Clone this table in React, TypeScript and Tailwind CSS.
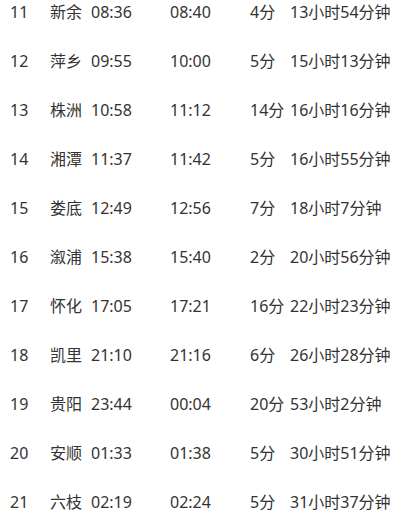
const rows: [string, string, string, string, string, string][] = [
  ["11", "新余", "08:36", "08:40", "4分", "13小时54分钟"],
  ["12", "萍乡", "09:55", "10:00", "5分", "15小时13分钟"],
  ["13", "株洲", "10:58", "11:12", "14分", "16小时16分钟"],
  ["14", "湘潭", "11:37", "11:42", "5分", "16小时55分钟"],
  ["15", "娄底", "12:49", "12:56", "7分", "18小时7分钟"],
  ["16", "溆浦", "15:38", "15:40", "2分", "20小时56分钟"],
  ["17", "怀化", "17:05", "17:21", "16分", "22小时23分钟"],
  ["18", "凯里", "21:10", "21:16", "6分", "26小时28分钟"],
  ["19", "贵阳", "23:44", "00:04", "20分", "53小时2分钟"],
  ["20", "安顺", "01:33", "01:38", "5分", "30小时51分钟"],
  ["21", "六枝", "02:19", "02:24", "5分", "31小时37分钟"],
];

export default function App() {
  return (
    <div className="w-[402px] h-[519px] overflow-hidden bg-white text-[#333] text-[16px] font-['Noto_Sans','Noto_Sans_CJK_SC',sans-serif]">
      <div className="-mt-[13px]">
        {rows.map((r) => (
          <div
            key={r[0]}
            className="grid h-[49px] items-center whitespace-nowrap pl-[10px] grid-cols-[40px_41px_79px_80px_40px_1fr]"
          >
            <span>{r[0]}</span>
            <span>{r[1]}</span>
            <span>{r[2]}</span>
            <span>{r[3]}</span>
            <span>{r[4]}</span>
            <span>{r[5]}</span>
          </div>
        ))}
      </div>
    </div>
  );
}
